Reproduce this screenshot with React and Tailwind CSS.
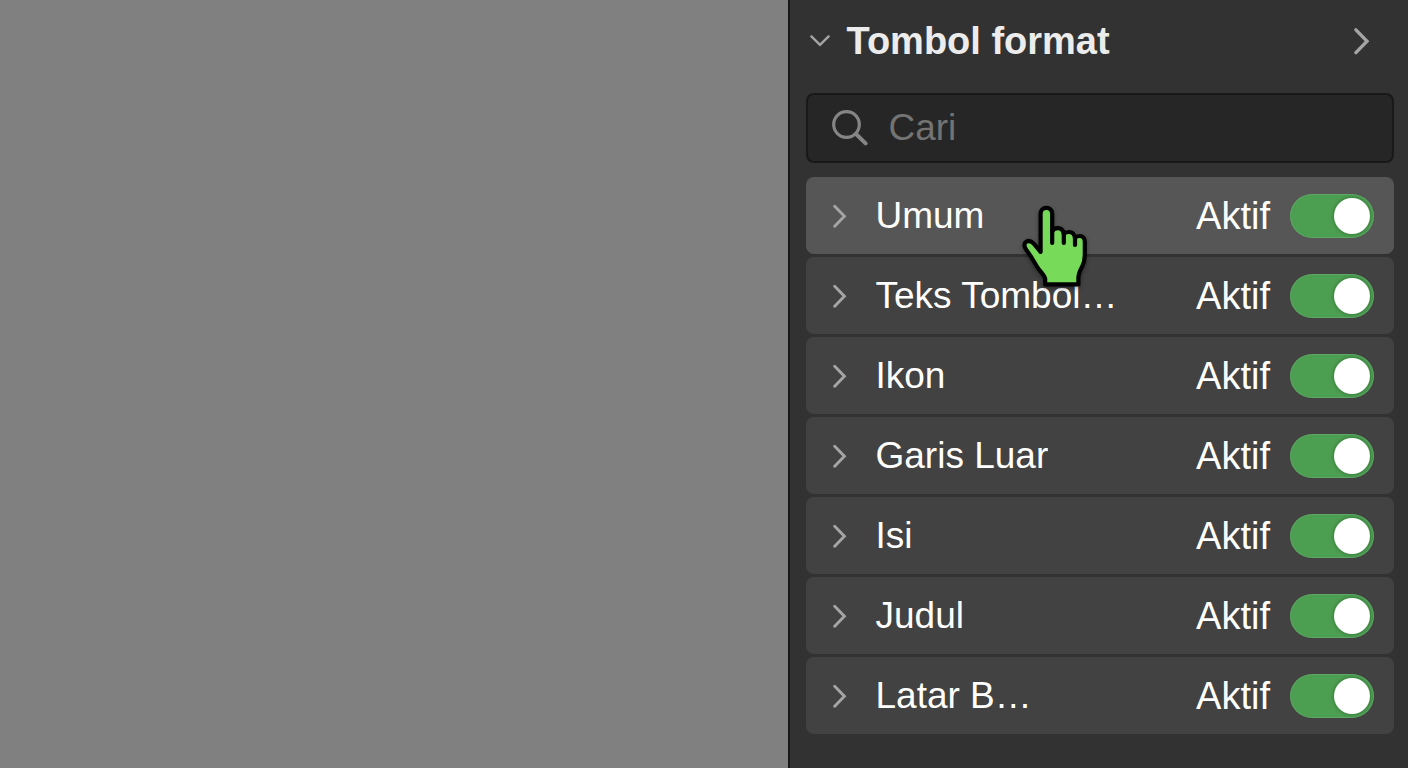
import { useState } from 'react'

const SECTIONS = [
    { id: 'umum', label: 'Umum' },
    { id: 'teks', label: 'Teks Tombol…' },
    { id: 'ikon', label: 'Ikon' },
    { id: 'garis', label: 'Garis Luar' },
    { id: 'isi', label: 'Isi' },
    { id: 'judul', label: 'Judul' },
    { id: 'latar', label: 'Latar B…' },
]

const ChevronRight = ({ className }) => (
    <svg className={className} viewBox="0 0 14 24" fill="none" stroke="currentColor"
        strokeWidth="2.9" strokeLinecap="round" strokeLinejoin="miter" aria-hidden="true">
        <path d="M1.7 2.2 L11.4 12.2 L1.7 22.2"/>
    </svg>
)

const ChevronDown = ({ className }) => (
    <svg className={className} viewBox="0 0 20 12" fill="none" stroke="currentColor"
        strokeWidth="2.4" strokeLinecap="round" aria-hidden="true">
        <path d="M1.4 1.4 L10 9.8 L18.6 1.4"/>
    </svg>
)

const SearchIcon = ({ className }) => (
    <svg className={className} viewBox="0 0 36 36" fill="none" stroke="currentColor"
        strokeLinecap="round" aria-hidden="true">
        <circle cx="14.5" cy="14.5" r="12.8" strokeWidth="3.2"/>
        <path d="M24 24 L33.6 33.4" strokeWidth="4"/>
    </svg>
)

const HandPointer = ({ className }) => (
    <svg className={className} viewBox="0 0 66 82" fill="#77da59" stroke="#000"
        strokeWidth="4.2" strokeLinejoin="round" strokeLinecap="round" aria-hidden="true">
        <path d="M18.6 46.8 V8.8 C18.6 5 21 2.8 24.4 2.8 C27.8 2.8 30.2 5 30.2 8.8 V26.4
            C31.4 24 33.2 23.2 35.8 23.2 C39 23.2 41.2 25 41.8 29
            C43.2 27.4 44.8 27 47 27 C50.2 27 52.4 28.8 53 33
            C54.2 31.6 55.6 31 57.6 31 C61 31 62.8 33.4 62.8 37
            V50 C62.8 55 62 58 60.2 61.4 C57.8 66 56.4 68.4 56.4 73 V79.4 H23.2 V74
            C22.8 69.6 18.4 67.4 14.6 61 C11 54.8 9 51 4.4 45
            C1.8 41.4 1.8 38.4 4.2 36.8 C6.8 35.2 9.6 36.2 12 38.8 Z"/>
        <path fill="none" d="M30.2 25 V38 M41.8 28 V38 M53 32 V40"/>
    </svg>
)

const Toggle = ({ id, checked, onChange }) => (
    <input
        id={id}
        type="checkbox"
        role="switch"
        checked={checked}
        onChange={onChange}
        className="flex h-11 w-[84px] shrink-0 cursor-pointer appearance-none items-center
            rounded-full bg-[#6b6b6b] px-1 inset-shadow-[0_0_0_1px_#ffffff1a]
            before:size-9 before:rounded-full before:bg-white
            before:shadow-[0_0_4px_rgba(0,0,0,0.35)]
            checked:justify-end checked:bg-[#4c9f51]"
    />
)

const SectionRow = ({ section, active, hovered, onToggle }) => (
    <li className={`relative flex h-[77px] items-center rounded-lg pr-5 pl-[27px]
        ${hovered ? 'bg-[#565656]' : 'bg-[#424242]'}`}>
        <button type="button" className="flex min-w-0 flex-1 items-center gap-7 text-left">
            <ChevronRight className="h-6 w-3.5 shrink-0 text-[#a5a5a5]"/>
            <span className="truncate text-[37px]">{section.label}</span>
        </button>
        <label htmlFor={`toggle-${section.id}`} className="mr-5 shrink-0">Aktif</label>
        <Toggle
            id={`toggle-${section.id}`}
            checked={active}
            onChange={() => onToggle(section.id)}
        />
        {hovered &&
            <HandPointer className="pointer-events-none absolute top-7 left-[216px] z-10
                h-[82px] w-[66px] drop-shadow-[0_2px_2px_rgba(0,0,0,0.35)]"/>
        }
    </li>
)

const App = () => {
    const [query, setQuery] = useState('')
    const [active, setActive] = useState(
        Object.fromEntries(SECTIONS.map(section => [section.id, true]))
    )

    const onToggle = (id) => {
        setActive({ ...active, [id]: !active[id] })
    }

    const visible = SECTIONS.filter(section =>
        section.label.toLowerCase().includes(query.toLowerCase())
    )

    return (
        <div className="flex min-h-screen bg-[#808080] font-['Liberation_Sans',Arial,sans-serif]
            text-[38px] leading-[46px] text-white">
            <main className="flex-1"/>
            <aside className="w-[44%] min-w-[480px] border-l-2 border-[#181818] bg-[#323232]
                pr-3.5 pb-8 pl-4">
                <header className="flex h-[93px] items-start justify-between pt-[18px] pr-6 pl-1">
                    <button type="button" className="flex items-center gap-4">
                        <ChevronDown className="h-3 w-5 text-[#a5a5a5]"/>
                        <h1 className="font-bold text-[#ececec]">Tombol format</h1>
                    </button>
                    <button type="button" aria-label="Buka" className="flex h-[46px] items-center">
                        <ChevronRight className="h-7 w-4 text-[#a5a5a5]"/>
                    </button>
                </header>
                <label className="flex h-[70px] items-center gap-5 rounded-lg border-2
                    border-[#191919] bg-[#262626] px-6">
                    <SearchIcon className="size-9 shrink-0 text-[#858585]"/>
                    <input
                        type="text"
                        aria-label="Cari"
                        placeholder="Cari"
                        value={query}
                        onChange={e => setQuery(e.target.value)}
                        className="min-w-0 flex-1 bg-transparent text-[37px] outline-none
                            placeholder:text-[#737373]"
                    />
                </label>
                <ul className="mt-3.5 flex flex-col gap-[3px]">
                    {visible.map(section => (
                        <SectionRow
                            key={section.id}
                            section={section}
                            active={active[section.id]}
                            hovered={section.id === 'umum'}
                            onToggle={onToggle}
                        />
                    ))}
                </ul>
            </aside>
        </div>
    )
}

export default App
